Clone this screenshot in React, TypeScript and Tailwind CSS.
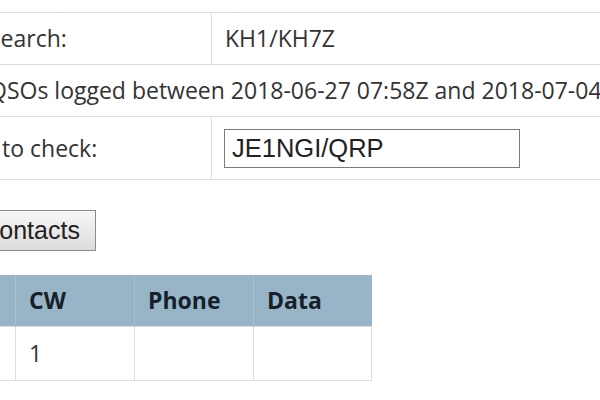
import React from 'react';

const cellBorder = 'border border-[#dedede]';

export default function App() {
  return (
    <div className="w-[600px] h-[400px] overflow-hidden bg-white text-[#333] font-['Open_Sans',sans-serif]">
      <div className="h-[12px]" />
      <table className="-ml-[20px] w-[840px] table-fixed border-collapse text-[23px] leading-none">
        <colgroup>
          <col className="w-[231px]" />
          <col />
        </colgroup>
        <tbody>
          <tr className="h-[52px]">
            <td className={`${cellBorder} pl-[7px] whitespace-nowrap`}>Search:</td>
            <td className={`${cellBorder} pl-[13px]`}>KH1/KH7Z</td>
          </tr>
          <tr className="h-[52px]">
            <td colSpan={2} className={`${cellBorder} pl-[8px] whitespace-nowrap`}>
              QSOs logged between 2018-06-27 07:58Z and 2018-07-04 05:12Z
            </td>
          </tr>
          <tr className="h-[63px]">
            <td className={`${cellBorder} pl-[21px] whitespace-nowrap`}>to check:</td>
            <td className={`${cellBorder} pl-[12px]`}>
              <input
                type="text"
                defaultValue="JE1NGI/QRP"
                className="block w-[296px] h-[39px] border border-[#7a7a7a] pl-[7px] text-[25.5px] text-[#222] font-['Liberation_Sans',Arial,sans-serif] outline-none"
              />
            </td>
          </tr>
        </tbody>
      </table>

      <div className="h-[30px]" />
      <button className="-ml-[107px] h-[41px] px-[15px] border border-[#8c8c8c] bg-linear-to-b from-[#f7f7f7] to-[#dcdcdc] text-[25px] leading-none text-[#222] font-['Liberation_Sans',Arial,sans-serif] whitespace-nowrap">
        Check contacts
      </button>

      <div className="h-[24px]" />
      <table className="-ml-[104px] table-fixed border-collapse text-[23px] leading-none">
        <colgroup>
          <col className="w-[119px]" />
          <col className="w-[119px]" />
          <col className="w-[119px]" />
          <col className="w-[118px]" />
        </colgroup>
        <thead>
          <tr className="h-[51px] bg-[#97b5c6] text-[#15202b] font-bold">
            <th className="px-[13px] text-left border-r border-[#a9c1cf]">Total</th>
            <th className="px-[13px] text-left border-r border-[#a9c1cf]">CW</th>
            <th className="px-[13px] text-left border-r border-[#a9c1cf]">Phone</th>
            <th className="px-[13px] text-left">Data</th>
          </tr>
        </thead>
        <tbody>
          <tr className="h-[54px]">
            <td className={`${cellBorder} px-[13px]`}>1</td>
            <td className={`${cellBorder} px-[13px]`}>1</td>
            <td className={`${cellBorder} px-[13px]`}></td>
            <td className={`${cellBorder} px-[13px]`}></td>
          </tr>
        </tbody>
      </table>
    </div>
  );
}
